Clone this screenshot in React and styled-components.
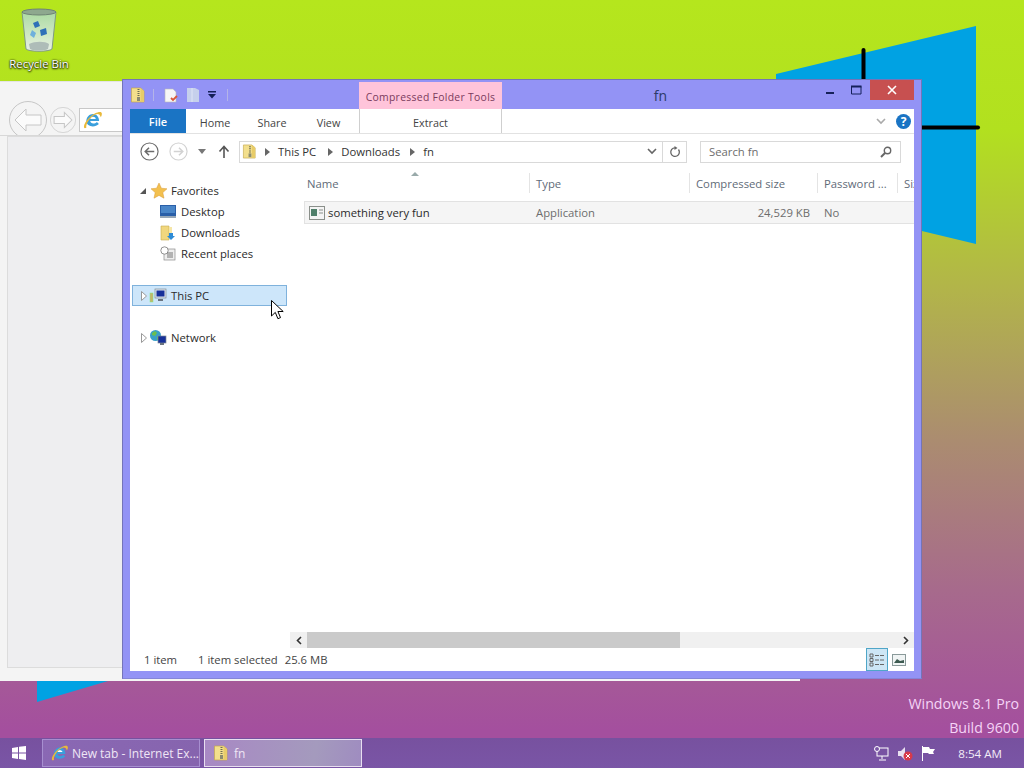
import React from 'react'
import styled, { createGlobalStyle } from 'styled-components'

const Global = createGlobalStyle`
  html, body { margin: 0; padding: 0; }
  body { font-family: "Open Sans", "Noto Sans", sans-serif; font-size: 11.3px; color: #333; }
`

const Desktop = styled.div`
  position: relative;
  width: 1024px;
  height: 768px;
  overflow: hidden;
  background: linear-gradient(to bottom, #b5e61d 0, #b2e01f 130px, #b2b44a 290px, #ab8c70 440px, #a76a8c 590px, #a44f9e 730px);
`

const DesktopIcon = styled.div`
  position: absolute;
  left: 0;
  top: 8px;
  width: 78px;
  display: flex;
  flex-direction: column;
  align-items: center;
  gap: 3px;
  color: #fff;
  font-size: 11.4px;
  text-shadow: 0 0 2px #000, 0 1px 2px #000;
`

const Logo = styled.svg`
  position: absolute;
  left: 0;
  top: 0;
`

const Watermark = styled.div`
  position: absolute;
  right: 5px;
  top: 692px;
  text-align: right;
  font-size: 14.2px;
  line-height: 24px;
  color: #f5d4f7;
`

/* the IE window behind */
const IeWindow = styled.div`
  position: absolute;
  left: 0;
  top: 81px;
  width: 800px;
  height: 600px;
  background: #f4f4f4;
  border-top: 1px solid #e4e4e4;
  box-sizing: border-box;
`

const IeBar = styled.div`
  display: flex;
  align-items: flex-start;
  gap: 3px;
  height: 54px;
  overflow: hidden;
  padding: 19px 0 0 9px;
  box-sizing: border-box;
  border-bottom: 1px solid #d8d8d8;
`

const IeSlot = styled.div`
  display: flex;
  margin-top: ${p => p.$top || 0}px;
`

const IeBody = styled.div`
  margin-left: 7px;
  height: 530px;
  background: #eeeef0;
  border: 1px solid #dcdcdc;
`

const IeAddress = styled.div`
  display: flex;
  align-items: center;
  width: 60px;
  height: 22px;
  padding-left: 3px;
  background: #fff;
  border: 1px solid #c8c8c8;
`

/* explorer */
const Explorer = styled.div`
  position: absolute;
  left: 122px;
  top: 79px;
  width: 800px;
  height: 600px;
  box-sizing: border-box;
  display: flex;
  flex-direction: column;
  padding: 0 7px 7px 7px;
  background: #9393f5;
  border: 1px solid #7474b8;
  border-bottom-color: #8585d8;
`

const TitleBar = styled.div`
  display: flex;
  align-items: flex-start;
  height: 29px;
  flex: none;
`

const QuickAccess = styled.div`
  display: flex;
  align-items: center;
  width: 229px;
  height: 29px;
  box-sizing: border-box;
`

const QuickItem = styled.span`
  display: flex;
  margin-left: ${p => p.$left || 0}px;
`

const Sep = styled.span`
  width: 1px;
  height: 12px;
  background: #b4b4e8;
`

const ContextTitle = styled.div`
  width: 143px;
  height: 27px;
  margin-top: 2px;
  box-sizing: border-box;
  padding-top: 8px;
  text-align: center;
  font-size: 10.4px;
  letter-spacing: 0.3px;
  color: #7a3b5c;
  background: #ffc4da;
`

const WindowTitle = styled.div`
  flex: 1;
  padding: 6px 0 0 2px;
  text-align: center;
  font-size: 14px;
  color: #2c3a68;
`

const WinButtons = styled.div`
  display: flex;
  align-items: flex-start;
`

const WinButton = styled.div`
  width: ${p => p.$w}px;
  height: 20px;
  display: flex;
  align-items: center;
  justify-content: center;
  background: ${p => p.$close ? '#c75050' : 'transparent'};
`

const Content = styled.div`
  flex: 1;
  display: flex;
  flex-direction: column;
  background: #fff;
  min-height: 0;
`

const RibbonTabs = styled.div`
  display: flex;
  align-items: stretch;
  height: 24px;
  flex: none;
  border-bottom: 1px solid #e2e2e2;
`

const FileTab = styled.div`
  width: 56px;
  display: flex;
  align-items: center;
  justify-content: center;
  background: #1a74c4;
  color: #fff;
  font-size: 11px;
  font-weight: 600;
`

const Tab = styled.div`
  width: ${p => p.$w}px;
  box-sizing: border-box;
  display: flex;
  align-items: center;
  justify-content: center;
  padding: 2px 0 0 ${p => p.$shift || 0}px;
  font-size: 10.8px;
  color: #444;
`

const ExtractTab = styled(Tab)`
  margin-left: 2px;
  border-left: 1px solid #cfcfcf;
  border-right: 1px solid #cfcfcf;
`

const RibbonEnd = styled.div`
  margin-left: auto;
  display: flex;
  align-items: center;
  gap: 10px;
  padding-right: 3px;
`

const HelpIcon = styled.div`
  width: 15px;
  height: 15px;
  border-radius: 50%;
  background: #1a74c4;
  color: #fff;
  font-size: 12px;
  font-weight: 700;
  line-height: 15px;
  text-align: center;
`

const AddressRow = styled.div`
  display: flex;
  align-items: center;
  height: 37px;
  flex: none;
  box-sizing: border-box;
  padding: 0 0 2px 10px;
`

const NavGroup = styled.div`
  display: flex;
  align-items: center;
  width: 99px;
  gap: 10px;
`

const AddressBar = styled.div`
  display: flex;
  align-items: center;
  width: 446px;
  height: 20px;
  border: 1px solid #d9d9d9;
  box-sizing: content-box;
`

const Crumbs = styled.div`
  flex: 1;
  display: flex;
  align-items: center;
  gap: 8px;
  padding-left: 2px;
  color: #333;
`

const CrumbMark = styled.svg`
  margin-left: ${p => p.$left || 0}px;
`

const AddressEnd = styled.div`
  width: 23px;
  height: 20px;
  margin-left: 5px;
  display: flex;
  align-items: center;
  justify-content: center;
  border-left: 1px solid #d9d9d9;
`

const SearchBox = styled.div`
  display: flex;
  align-items: center;
  justify-content: space-between;
  width: 183px;
  height: 20px;
  margin-left: 13px;
  padding: 0 8px;
  box-sizing: content-box;
  border: 1px solid #d9d9d9;
  color: #6d6d6d;
`

const Panes = styled.div`
  flex: 1;
  display: flex;
  min-height: 0;
`

const NavPane = styled.div`
  width: 160px;
  flex: none;
  padding: 9px 0 0 2px;
  box-sizing: border-box;
`

const NavRow = styled.div`
  display: flex;
  align-items: center;
  height: 21px;
  padding-left: ${p => p.$indent || 0}px;
  gap: ${p => p.$gap ?? 4}px;
  margin-top: ${p => p.$top || 0}px;
  color: #2b2b2b;
`

const NavHover = styled(NavRow)`
  width: 155px;
  background: #cde6fa;
  border: 1px solid #7fb2dc;
  box-sizing: border-box;
`

const NavLabel = styled.span`
  margin-left: ${p => p.$left || 0}px;
`

const Arrow = styled.span`
  width: 10px;
  display: flex;
  justify-content: center;
`

const Cursor = styled.svg`
  position: absolute;
  left: 271px;
  top: 300px;
`

const Files = styled.div`
  flex: 1;
  min-width: 0;
  display: flex;
  flex-direction: column;
  overflow: hidden;
`

const Columns = styled.div`
  position: relative;
  display: flex;
  height: 29px;
  flex: none;
  margin-left: 14px;
  padding-top: 2px;
  box-sizing: border-box;
  margin-bottom: 1px;
`

const SortMark = styled.svg`
  position: absolute;
  left: 107px;
  top: 0;
`

const Col = styled.div`
  width: ${p => p.$w}px;
  flex: none;
  height: 20px;
  line-height: 21px;
  box-sizing: border-box;
  padding-left: ${p => p.$pad ?? 6}px;
  color: #5f6b78;
  white-space: nowrap;
  overflow: hidden;
  border-right: ${p => p.$last ? 'none' : '1px solid #e4e4e4'};
`

const FileRow = styled.div`
  display: flex;
  align-items: center;
  height: 21px;
  flex: none;
  width: 609px;
  margin-left: 14px;
  background: #f5f5f5;
  border-top: 1px solid #e2e2e2;
  border-bottom: 1px solid #e2e2e2;
  border-left: 1px solid #e2e2e2;
  color: #6d6d6d;
`

const Cell = styled.div`
  width: ${p => p.$w}px;
  flex: none;
  box-sizing: border-box;
  padding-left: ${p => p.$pad ?? 6}px;
  text-align: ${p => p.$align || 'left'};
`

const NameCell = styled(Cell)`
  display: flex;
  align-items: center;
  gap: 3px;
  padding-left: 4px;
  color: #2b2b2b;
`

const Spacer = styled.div`
  flex: 1;
`

const ScrollBar = styled.div`
  display: flex;
  align-items: center;
  height: 16px;
  flex: none;
  background: #f0f0f0;
`

const ScrollEnd = styled.div`
  width: 17px;
  height: 16px;
  display: flex;
  align-items: center;
  justify-content: center;
`

const ScrollThumb = styled.div`
  width: 373px;
  height: 16px;
  background: #cacaca;
`

const StatusBar = styled.div`
  display: flex;
  align-items: center;
  height: 23px;
  flex: none;
  padding: 0 4px 0 14px;
  color: #444;
`

const StatusItem = styled.span`
  margin-right: ${p => p.$gap}px;
`

const ViewButtons = styled.div`
  margin-left: auto;
  display: flex;
  align-items: center;
`

const ViewButton = styled.div`
  width: 22px;
  height: 23px;
  display: flex;
  align-items: center;
  justify-content: center;
  box-sizing: border-box;
  background: ${p => p.$on ? '#cde6f5' : 'transparent'};
  border: 1px solid ${p => p.$on ? '#4fa6c8' : 'transparent'};
`

/* taskbar */
const Taskbar = styled.div`
  position: absolute;
  left: 0;
  right: 0;
  bottom: 0;
  height: 30px;
  display: flex;
  align-items: center;
  background: linear-gradient(to bottom, #77519f, #7a55a6);
`

const StartButton = styled.div`
  width: 42px;
  display: flex;
  justify-content: center;
  padding-right: 4px;
  box-sizing: border-box;
`

const TaskButton = styled.div`
  width: 158px;
  height: 28px;
  margin-right: 4px;
  box-sizing: border-box;
  display: flex;
  align-items: center;
  gap: 3px;
  padding-left: 8px;
  color: #efe6f5;
  font-size: 12px;
  white-space: nowrap;
  border: 1px solid ${p => p.$active ? '#e8def0' : '#a78fd0'};
  background: ${p => p.$active
    ? 'linear-gradient(100deg, #a888c4, #a49abd 70%, #9f8cc0)'
    : 'linear-gradient(100deg, #8a68b4, #8664ae)'};
`

const Tray = styled.div`
  margin-left: auto;
  display: flex;
  align-items: center;
  gap: 8px;
  padding-right: 22px;
`

const Clock = styled.div`
  margin-left: 14px;
  color: #f3ecf7;
  font-size: 11.6px;
`

const ZipIcon = ({ size = 16 }) => (
  <svg width={size} height={size} viewBox="0 0 16 16">
    <path d="M1.500 1h9l3.500 3v11H1.500z" fill="#f3df8c" stroke="#c4a84c" strokeWidth="0.7" />
    <path d="M10.500 1L14 4v11h-3.500z" fill="#e8cc68" />
    <path d="M7.500 2h2v1h-2zm0 2h2v1h-2zm0 2h2v1h-2zm0 2h2v1h-2z" fill="#6e6e50" />
    <rect x="7" y="10" width="3" height="4" fill="#8c8c70" />
  </svg>
)

const IeIcon = ({ size = 18 }) => (
  <svg width={size} height={size} viewBox="0 0 18 18">
    <path d="M3 10c0-4 3-6.500 6-6.500s5.500 2.500 5.500 6.500H6.500c.2 2.500 3.800 3 6 .8l1.800 1.800C10.500 16.500 3 15 3 10z" fill="#3a9fdc" />
    <path d="M6.500 8h5c-.2-2.500-4.800-2.500-5 0z" fill="#fff" />
    <path d="M1 16c-1-3 4-10 10-13 3-1.500 6-2 6 .5 0 1-.5 2-1 3-.5-2-1.500-3-3-3C8 4 2 12 3 16c-1 .5-1.700.5-2 0z" fill="#e9b93a" />
  </svg>
)

const BackCircle = ({ size, color, dir = 'left', strokeW = 1.2 }) => (
  <svg width={size} height={size} viewBox="0 0 20 20">
    <circle cx="10" cy="10" r="9" fill="none" stroke={color} strokeWidth={strokeW} />
    <path
      d={dir === 'left' ? 'M15 10H6M9.500 6L5.500 10l4 4' : 'M5 10h9M10.500 6l4 4-4 4'}
      fill="none"
      stroke={color}
      strokeWidth="1.600"
    />
  </svg>
)

// IE's big toolbar buttons have a hollow arrow
const HollowCircle = ({ size, dir = 'left' }) => (
  <svg width={size} height={size} viewBox="0 0 38 38">
    <circle cx="19" cy="19" r="18.500" fill="none" stroke="#c6c6c6" />
    <path
      d="M6 19L17 8v6h15v10H17v6z"
      fill="#fbfbfb"
      stroke="#c6c6c6"
      strokeWidth={size < 30 ? 1.500 : 1}
      transform={dir === 'right' ? 'matrix(-1 0 0 1 38 0)' : undefined}
    />
  </svg>
)

const Crumb = ({ left }) => (
  <CrumbMark $left={left} width="5" height="8" viewBox="0 0 5 8"><path d="M0 0l5 4-5 4z" fill="#666" /></CrumbMark>
)

const Chevron = ({ color = '#777' }) => (
  <svg width="10" height="7" viewBox="0 0 10 7"><path d="M1 1l4 4 4-4" fill="none" stroke={color} strokeWidth="1.600" /></svg>
)

const OpenTri = () => (
  <svg width="8" height="8" viewBox="0 0 8 8"><path d="M1 7h6V1z" fill="#555" /></svg>
)

const ClosedTri = () => (
  <svg width="6" height="10" viewBox="0 0 6 10"><path d="M.5.500l5 4.500-5 4.500z" fill="#fff" stroke="#999" /></svg>
)

const PcIcon = () => (
  <svg width="18" height="16" viewBox="0 0 18 16">
    <rect x="6" y="1" width="11" height="9" fill="#dfe6ee" stroke="#7f8a96" strokeWidth="0.700" />
    <rect x="7.500" y="2.500" width="8" height="6" fill="#16309a" />
    <rect x="9" y="11" width="5" height="2" fill="#6b7480" />
    <rect x="1" y="5" width="3" height="9" fill="#c8b46a" stroke="#7e8" strokeWidth="0.500" />
  </svg>
)

const NetIcon = () => (
  <svg width="18" height="17" viewBox="0 0 18 17">
    <circle cx="6.500" cy="6.500" r="5.500" fill="#38a0c8" />
    <path d="M3 4l3-2 2 2-2 3-3-1zm5 4l2-1v3l-2 1z" fill="#6bbf4e" />
    <rect x="9" y="7" width="8" height="7" fill="#16309a" stroke="#7f8a96" strokeWidth="0.700" />
    <rect x="11" y="14" width="4" height="2" fill="#6b7480" />
  </svg>
)

export default function App() {
  return (
    <Desktop>
      <Global />
      <Logo width="1024" height="768">
        <path d="M776 74 976 26V244L776 196z" fill="#00a2e3" />
        <path d="M37 681v21l71-21z" fill="#00a2e3" />
        <path d="M863.500 50v30" stroke="#000" strokeWidth="4" strokeLinecap="round" />
        <path d="M921 127.500h57" stroke="#000" strokeWidth="4" strokeLinecap="round" />
      </Logo>

      <DesktopIcon>
        <svg width="36" height="45" viewBox="0 0 36 45">
          <defs>
            <linearGradient id="binFill" x1="0" y1="0" x2="0" y2="1">
              <stop offset="0" stopColor="#a8d8a0" />
              <stop offset="0.6" stopColor="#cfe8c4" />
              <stop offset="1" stopColor="#e8efe8" />
            </linearGradient>
          </defs>
          <path d="M1 4c6-3 28-3 34 0l-4 37c-3 3-23 3-26 0z" fill="url(#binFill)" stroke="#7f9a84" />
          <ellipse cx="18" cy="4" rx="17" ry="3" fill="#8ea88e" stroke="#6f8474" />
          <path d="M12 15l5-2 2 5-5 2zm7 7l6-2 1 6-6 2z" fill="#2f70b8" />
          <path d="M11 22l4 3-2 5-4-3z" fill="#6fb0dc" />
          <path d="M8 36c6-3 16-3 20 0l-1 5c-4 2-14 2-18 0z" fill="#aebcb8" />
        </svg>
        Recycle Bin
      </DesktopIcon>

      <IeWindow>
        <IeBar>
          <HollowCircle size={38} />
          <IeSlot $top={6}><HollowCircle size={26} dir="right" /></IeSlot>
          <IeSlot $top={7}><IeAddress><IeIcon size={20} /></IeAddress></IeSlot>
        </IeBar>
        <IeBody />
      </IeWindow>

      <Explorer>
        <TitleBar>
          <QuickAccess>
            <ZipIcon size={16} />
            <QuickItem $left={7}><Sep /></QuickItem>
            <QuickItem $left={9}>
              <svg width="16" height="16" viewBox="0 0 16 16">
                <path d="M2 2h8l3 3v10H2z" fill="#f6f6f6" stroke="#bbb" strokeWidth="0.600" />
                <path d="M8 11l2 2 4-4" stroke="#d8583a" strokeWidth="1.800" fill="none" />
              </svg>
            </QuickItem>
            <QuickItem $left={7}>
              <svg width="14" height="16" viewBox="0 0 14 16">
                <path d="M1 1h8l4 2v12H1z" fill="#c6d0ec" />
                <path d="M6 1v14" stroke="#dfe5f6" />
              </svg>
            </QuickItem>
            <QuickItem $left={8}>
              <svg width="8" height="8" viewBox="0 0 8 8"><path d="M0 0h8v1.500H0zM0 3h8L4 7.500z" fill="#15205a" /></svg>
            </QuickItem>
            <QuickItem $left={11}><Sep /></QuickItem>
          </QuickAccess>
          <ContextTitle>Compressed Folder Tools</ContextTitle>
          <WindowTitle>fn</WindowTitle>
          <WinButtons>
            <WinButton $w={26}>
              <svg width="9" height="10" viewBox="0 0 9 10"><rect y="7" width="8" height="2" fill="#15205a" /></svg>
            </WinButton>
            <WinButton $w={27}>
              <svg width="11" height="10" viewBox="0 0 11 10"><path d="M.5 1.500h9.500v7.500H.5z" fill="none" stroke="#15205a" /><rect x="0" y="0.500" width="10.500" height="2" fill="#15205a" /></svg>
            </WinButton>
            <WinButton $w={44} $close>
              <svg width="10" height="10" viewBox="0 0 10 10"><path d="M1 1l8 8M9 1l-8 8" stroke="#fff" strokeWidth="1.600" /></svg>
            </WinButton>
          </WinButtons>
        </TitleBar>

        <Content>
          <RibbonTabs>
            <FileTab>File</FileTab>
            <Tab $w={57} $shift={1}>Home</Tab>
            <Tab $w={57} $shift={1}>Share</Tab>
            <Tab $w={57}>View</Tab>
            <ExtractTab $w={143}>Extract</ExtractTab>
            <RibbonEnd>
              <Chevron color="#aaa" />
              <HelpIcon>?</HelpIcon>
            </RibbonEnd>
          </RibbonTabs>

          <AddressRow>
            <NavGroup>
              <BackCircle size={19} color="#6b6b6b" />
              <BackCircle size={19} color="#d2d2d2" dir="right" />
              <svg width="8" height="5" viewBox="0 0 8 5"><path d="M0 0h8L4 5z" fill="#777" /></svg>
              <svg width="16" height="13" viewBox="-2 0 16 13"><path d="M6 13V2M1.500 6.500L6 1.500l4.500 5" fill="none" stroke="#555" strokeWidth="1.600" /></svg>
            </NavGroup>
            <AddressBar>
              <Crumbs>
                <ZipIcon size={15} />
                <Crumb />
                <span>This PC</span>
                <Crumb left={4} />
                <span>Downloads</span>
                <Crumb left={2} />
                <span>fn</span>
              </Crumbs>
              <Chevron color="#666" />
              <AddressEnd>
                <svg width="12" height="12" viewBox="0 0 12 12">
                  <path d="M9.500 3.500a4.300 4.300 0 1 1-3.500-1.700" fill="none" stroke="#666" strokeWidth="1.300" />
                  <path d="M5.500 0v4l3-2z" fill="#666" />
                </svg>
              </AddressEnd>
            </AddressBar>
            <SearchBox>
              <span>Search fn</span>
              <svg width="12" height="12" viewBox="0 0 12 12">
                <circle cx="7.500" cy="4.500" r="3.200" fill="none" stroke="#666" strokeWidth="1.400" />
                <path d="M5 7l-4 4" stroke="#666" strokeWidth="2" />
              </svg>
            </SearchBox>
          </AddressRow>

          <Panes>
            <NavPane>
              <NavRow $indent={6} $gap={3}>
                <Arrow><OpenTri /></Arrow>
                <svg width="16" height="16" viewBox="0 0 16 16">
                  <path d="M8 0l2.400 5.200 5.600.6-4.200 3.800 1.200 5.600L8 12.400 3 15.200l1.200-5.600L0 5.800l5.600-.6z" fill="#f3c04e" stroke="#d89a38" strokeWidth="0.500" />
                </svg>
                <NavLabel $left={1}>Favorites</NavLabel>
              </NavRow>
              <NavRow $indent={28} $gap={5}>
                <svg width="16" height="13" viewBox="0 0 16 13">
                  <rect width="16" height="11" fill="#2a5fa8" />
                  <rect x="1" y="1" width="14" height="7" fill="#4a86c8" />
                  <rect y="11" width="16" height="2" fill="#98a8b8" />
                </svg>
                Desktop
              </NavRow>
              <NavRow $indent={28} $gap={5}>
                <svg width="16" height="16" viewBox="0 0 16 16">
                  <path d="M1 1h8v14H1z" fill="#f1d77e" stroke="#c8ac50" strokeWidth="0.600" />
                  <path d="M9 2h3v6H9z" fill="#f5e6a8" />
                  <path d="M9 8h4v3h2l-4 4-4-4h2z" fill="#2e8bd6" />
                </svg>
                Downloads
              </NavRow>
              <NavRow $indent={28} $gap={5}>
                <svg width="16" height="15" viewBox="0 0 16 15">
                  <rect x="4" y="3" width="11" height="11" fill="#eee" stroke="#8a8a8a" strokeWidth="0.700" />
                  <circle cx="4.500" cy="4.500" r="3.700" fill="#fff" stroke="#777" strokeWidth="0.800" />
                  <path d="M7 7h6M7 9h6M7 11h6" stroke="#777" />
                </svg>
                Recent places
              </NavRow>
              <NavHover $top={21} $indent={6} $gap={0}>
                <Arrow><ClosedTri /></Arrow>
                <PcIcon />
                <NavLabel $left={4}>This PC</NavLabel>
              </NavHover>
              <NavRow $top={21} $indent={7} $gap={0}>
                <Arrow><ClosedTri /></Arrow>
                <NetIcon />
                <NavLabel $left={4}>Network</NavLabel>
              </NavRow>
            </NavPane>

            <Files>
              <Columns>
                <SortMark width="8" height="5" viewBox="0 0 8 5"><path d="M0 5l4-4 4 4z" fill="#9aa" /></SortMark>
                <Col $w={226} $pad={3}>Name</Col>
                <Col $w={160}>Type</Col>
                <Col $w={128}>Compressed size</Col>
                <Col $w={80}>Password ...</Col>
                <Col $w={30} $last>Size</Col>
              </Columns>
              <FileRow>
                <NameCell $w={224}>
                  <svg width="16" height="14" viewBox="0 0 16 14">
                    <rect x="0.500" y="0.500" width="15" height="13" fill="#f4f4f4" stroke="#8a8f8a" />
                    <rect x="2" y="3" width="6" height="7" fill="#4f7f6a" />
                    <path d="M10 4h4M10 7h4" stroke="#8a8f8a" />
                  </svg>
                  something very fun
                </NameCell>
                <Cell $w={160} $pad={7}>Application</Cell>
                <Cell $w={121} $align="right">24,529 KB</Cell>
                <Cell $w={60} $pad={14}>No</Cell>
              </FileRow>
              <Spacer />
              <ScrollBar>
                <ScrollEnd>
                  <svg width="6" height="9" viewBox="0 0 6 9"><path d="M5 1L1.500 4.500 5 8" fill="none" stroke="#333" strokeWidth="1.600" /></svg>
                </ScrollEnd>
                <ScrollThumb />
                <Spacer />
                <ScrollEnd>
                  <svg width="6" height="9" viewBox="0 0 6 9"><path d="M1 1l3.500 3.500L1 8" fill="none" stroke="#333" strokeWidth="1.600" /></svg>
                </ScrollEnd>
              </ScrollBar>
            </Files>
          </Panes>

          <StatusBar>
            <StatusItem $gap={21}>1 item</StatusItem>
            <StatusItem $gap={7}>1 item selected</StatusItem>
            <StatusItem $gap={0}>25.6 MB</StatusItem>
            <ViewButtons>
              <ViewButton $on>
                <svg width="16" height="14" viewBox="0 0 16 14">
                  <path d="M1 1h3v3H1zM1 5.500h3v3H1zM1 10h3v3H1z" fill="none" stroke="#666" />
                  <path d="M6 2.500h4M11 2.500h4M6 7h4M11 7h4M6 11.500h4M11 11.500h4" stroke="#666" />
                </svg>
              </ViewButton>
              <ViewButton>
                <svg width="14" height="12" viewBox="0 0 14 12">
                  <rect x="0.500" y="0.500" width="13" height="11" fill="#f0f4f4" stroke="#8a9a9a" />
                  <path d="M2 9l3-4 3 2 4-1v3z" fill="#3c5a50" />
                </svg>
              </ViewButton>
            </ViewButtons>
          </StatusBar>
        </Content>
      </Explorer>

      <Cursor width="13" height="20" viewBox="0 0 13 20">
        <path d="M.5.500v15.500l3.800-3.600 2.600 6.300 2.600-1.100-2.600-6.100h5.300z" fill="#fff" stroke="#000" />
      </Cursor>

      <Watermark>
        Windows 8.1 Pro<br />
        Build 9600
      </Watermark>

      <Taskbar>
        <StartButton>
          <svg width="14" height="14" viewBox="0 0 14 14">
            <path d="M0 2l6-1v5.500H0zM7 .800L14 0v6.500H7zM0 7.500h6V13l-6-1zM7 7.500h7V14l-7-1z" fill="#fff" />
          </svg>
        </StartButton>
        <TaskButton>
          <IeIcon />
          New tab - Internet Ex...
        </TaskButton>
        <TaskButton $active>
          <ZipIcon size={16} />
          <NavLabel $left={2}>fn</NavLabel>
        </TaskButton>
        <Tray>
          <svg width="15" height="15" viewBox="0 0 15 15">
            <rect x="3" y="2" width="11" height="8" fill="none" stroke="#fff" />
            <circle cx="3" cy="3" r="2.500" fill="#7a55a6" stroke="#fff" />
            <path d="M8 10v3M5 14h7" stroke="#fff" />
          </svg>
          <svg width="16" height="15" viewBox="0 0 16 15">
            <path d="M1 5h3l4-4v13l-4-4H1z" fill="#e8e0f0" />
            <circle cx="11" cy="10" r="4.500" fill="#d8394a" />
            <path d="M9 8l4 4M13 8l-4 4" stroke="#fff" />
          </svg>
          <svg width="15" height="15" viewBox="0 0 15 15">
            <path d="M1.500 0v15" stroke="#fff" />
            <path d="M2 1h6l1 2h5l-2 3 1 2H8L7 7H2z" fill="#fff" />
          </svg>
          <Clock>8:54 AM</Clock>
        </Tray>
      </Taskbar>
    </Desktop>
  )
}
